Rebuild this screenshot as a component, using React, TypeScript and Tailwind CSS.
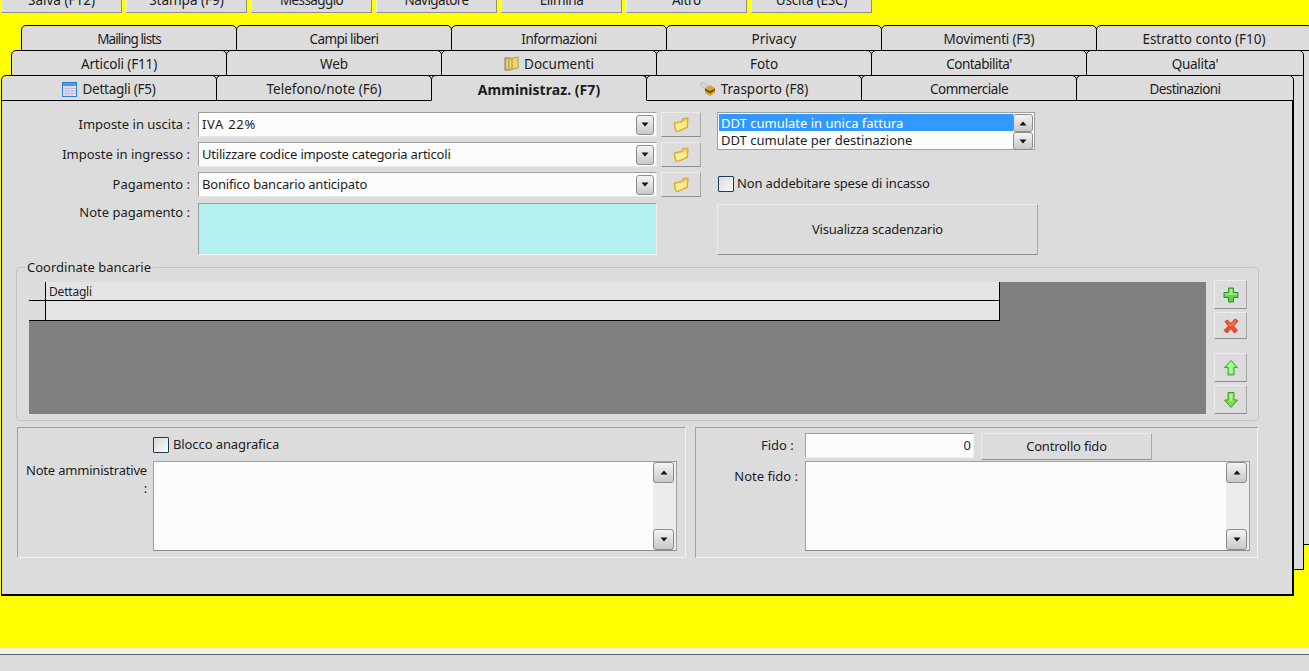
import React from "react";

const font = { fontFamily: '"Noto Sans", Tahoma, sans-serif' };

function Tab({ label, active, icon, last, track = "" }: { label: string; active?: boolean; icon?: React.ReactNode; last?: boolean; track?: string }) {
  return (
    <div
      className={
        "h-[26px] shrink-0 -mr-px flex items-center justify-center gap-[5px] rounded-t-[5px] border border-black bg-[#dcdcdc] pt-[2px] text-[#1c1c1c] " +
        (active ? "relative z-10 border-b-[#dcdcdc] text-[14px] font-bold tracking-[0.05px] " : "text-[13.5px] ") +
        (last ? "w-[218px]" : "w-[216px]")
      }
    >
      {icon}
      <span className={track}>{label}</span>
    </div>
  );
}

function Calendar() {
  return (
    <svg width="15" height="15" viewBox="0 0 15 15">
      <rect x="0.5" y="0.5" width="14" height="14" fill="#e8e4f4" stroke="#2f7fd0" />
      <rect x="1" y="1" width="13" height="3" fill="#4a9be8" />
      <path d="M1 6.5h13M1 9h13M1 11.5h13M4 4v10M7 4v10M10 4v10" stroke="#c2b8dc" strokeWidth="1" />
    </svg>
  );
}

function Folder({ w = 16 }: { w?: number }) {
  return (
    <svg width={w} height={w} viewBox="0 0 16 16">
      <path d="M1 6 L8 4.5 L10 1.5 L15 1 L14.5 10.5 L5 14.5 L2.5 14 Z" fill="#efc64a" stroke="#cfa92e" strokeWidth="1" strokeLinejoin="round" />
      <path d="M2.5 7 L10 5.5 L13.5 3 L13.5 9.5 L5 13.5 L3.5 13 Z" fill="#fcec94" />
    </svg>
  );
}

function Docs() {
  return (
    <svg width="16" height="16" viewBox="0 0 16 16">
      <rect x="1" y="2" width="5" height="12" fill="#d8c88a" stroke="#8a7a3a" />
      <path d="M5 3 L14 1 L14 12 L5 14 Z" fill="#f2d568" stroke="#b69a36" />
      <path d="M8 3 L8 13" stroke="#a88f3a" />
    </svg>
  );
}

function Truck() {
  return (
    <svg width="16" height="14" viewBox="0 0 16 14">
      <path d="M0 2 L4 0 L8 5 L5 8 Z" fill="#d4d4dc" stroke="#a4a4ae" strokeWidth="0.5" />
      <path d="M5 6 L10 3 L15 6 L15 11 L10 14 L5 11 Z" fill="#d9a62e" />
      <path d="M5 6.5 L10 9 L15 6.5 L15 8.5 L10 11.5 L5 8.5 Z" fill="#7a4e14" />
    </svg>
  );
}

function Spin({ up, h = "h-[18px]", w = "w-[20px]" }: { up?: boolean; h?: string; w?: string }) {
  return (
    <div className={"flex shrink-0 items-center justify-center rounded-[3px] border border-[#8c8c8c] bg-gradient-to-b from-[#f4f4f4] to-[#c8c8c8] " + h + " " + w}>
      <svg width="8" height="5" viewBox="0 0 8 5">
        <path d={up ? "M4 0.5 L7.5 4.5 L0.5 4.5 Z" : "M0.5 0.5 L7.5 0.5 L4 4.5 Z"} fill="#111" />
      </svg>
    </div>
  );
}

function Combo({ value, track = "tracking-[-0.2px]" }: { value: string; track?: string }) {
  return (
    <div className="flex h-[25px] w-[459px] items-center justify-between border border-[#a0a0a0] border-b-[#e8e8e8] border-r-[#e8e8e8] bg-[#fcfcfc] pl-[3px] pr-[2px]">
      <span className={"pt-[1px] " + track}>{value}</span>
      <Spin h="h-[20px]" w="w-[18px]" />
    </div>
  );
}

function RaisedBtn({ className, children }: { className: string; children?: React.ReactNode }) {
  return (
    <div className={"flex shrink-0 items-center justify-center border border-[#ececec] border-b-[#8e8e8e] border-r-[#a8a8a8] bg-[#dcdcdc] " + className}>
      {children}
    </div>
  );
}

function FormRow({ label, value, track }: { label: string; value: string; track?: string }) {
  return (
    <div className="flex h-[25px] items-center">
      <div className="w-[188px] text-right">{label}</div>
      <div className="ml-[8px] flex items-center gap-[4px]">
        <Combo value={value} track={track} />
        <RaisedBtn className="h-[25px] w-[40px]"><Folder /></RaisedBtn>
      </div>
    </div>
  );
}

function Check() {
  return <div className="h-[16px] w-[16px] shrink-0 rounded-[1px] border border-[#1f3a5f] bg-gradient-to-br from-[#d8d8d8] to-[#fcfcfc]" />;
}

function NoteArea({ className }: { className: string }) {
  return (
    <div className={"flex h-[90px] justify-end border border-[#a0a0a0] border-b-[#8c8c8c] bg-[#fcfcfc] " + className}>
      <div className="flex w-[23px] flex-col justify-between bg-[#ececec]">
        <Spin up h="h-[21px]" w="w-[21px]" />
        <Spin h="h-[21px]" w="w-[21px]" />
      </div>
    </div>
  );
}

function Plus() {
  return (
    <svg width="16" height="16" viewBox="0 0 16 16">
      <path d="M5.5 1 H10.5 V5.5 H15 V10.5 H10.5 V15 H5.5 V10.5 H1 V5.5 H5.5 Z" fill="#5fd04a" stroke="#2f8f2f" strokeLinejoin="round" />
      <path d="M6.5 2 H9.5 V6.5 H14 V8 H2 V6.5 H6.5 Z" fill="#a4ec8c" />
    </svg>
  );
}
function Cross() {
  return (
    <svg width="16" height="16" viewBox="0 0 16 16">
      <path d="M2 3.5 L4.5 2 L8 5.5 L12 1 L15 3 L10.5 8 L14.5 12.5 L11.5 15 L8 10.5 L4 15 L1 12.5 L5.5 8 Z" fill="#f0502c" stroke="#d2402a" strokeLinejoin="round" />
      <path d="M4.5 3 L8 7 L12 2.5 L13 3.5 L8.5 8 L7 8 Z" fill="#fb8a5c" />
    </svg>
  );
}
function ArrowUp() {
  return (
    <svg width="14" height="16" viewBox="0 0 14 16">
      <path d="M7 0.5 L13.5 7.5 L10 7.5 L10 15 L4 15 L4 7.5 L0.5 7.5 Z" fill="#7cf06a" stroke="#36a83a" strokeLinejoin="round" />
      <path d="M7 2 L11 6.5 L8.5 6.5 L8.5 13 L5.5 13 L5.5 6.5 L3 6.5 Z" fill="#b6f8a4" />
    </svg>
  );
}
function ArrowDown() {
  return (
    <svg width="14" height="16" viewBox="0 0 14 16">
      <path d="M4 0.5 L10 0.5 L10 8 L13.5 8 L7 15.5 L0.5 8 L4 8 Z" fill="#7ce04a" stroke="#3d9c30" strokeLinejoin="round" />
      <path d="M5.5 2 L8.5 2 L8.5 9 L5.5 9 Z" fill="#b6f08c" />
    </svg>
  );
}

const toolbar = [
  { t: "Salva (F12)", c: "" },
  { t: "Stampa (F9)", c: "" },
  { t: "Messaggio", c: "tracking-[-0.6px]" },
  { t: "Navigatore", c: "tracking-[-0.6px]" },
  { t: "Elimina", c: "tracking-[-0.4px]" },
  { t: "Altro", c: "tracking-[-0.3px]" },
  { t: "Uscita (ESC)", c: "tracking-[-0.2px]" },
];

export default function App() {
  return (
    <div style={font} className="flex h-[671px] w-[1309px] flex-col overflow-hidden bg-[#ffff00] text-[13px] text-[#1c1c1c]">
      <div className="flex h-[13px] shrink-0 items-end gap-[4px] overflow-hidden pl-[1px]">
        {toolbar.map(({ t, c }) => (
          <div key={t} className="flex h-[25px] w-[121px] shrink-0 items-center justify-center border border-[#ececec] border-b-[#8e8e8e] border-r-[#8e8e8e] bg-[#dcdcdc] text-[13.5px]">
            <span className={c}>{t}</span>
          </div>
        ))}
      </div>

      <div className="relative mt-[12px] h-[571px] shrink-0">
        <div className="absolute left-[100px] top-[24px] h-[496px] w-[1300px] border border-black bg-[#dcdcdc]" />
        <div className="absolute left-[100px] top-[49px] h-[496px] w-[1204px] border border-black bg-[#dcdcdc]" />

        <div className="relative flex pl-[21px]">
          <Tab label="Mailing lists" track="tracking-[-0.9px]" />
          <Tab label="Campi liberi" track="tracking-[-0.6px]" />
          <Tab label="Informazioni" track="tracking-[-0.5px]" />
          <Tab label="Privacy" />
          <Tab label="Movimenti (F3)" track="tracking-[-0.2px]" />
          <Tab label="Estratto conto (F10)" />
        </div>
        <div className="relative -mt-px flex pl-[11px]">
          <Tab label="Articoli (F11)" track="tracking-[-0.15px]" />
          <Tab label="Web" />
          <Tab label="Documenti" icon={<Docs />} track="-ml-[1px]" />
          <Tab label="Foto" />
          <Tab label="Contabilita'" track="tracking-[-0.5px]" />
          <Tab label="Qualita'" track="tracking-[-0.3px]" last />
        </div>
        <div className="relative -mt-px flex pl-[1px]">
          <Tab label="Dettagli (F5)" icon={<Calendar />} track="tracking-[-0.25px]" />
          <Tab label="Telefono/note (F6)" />
          <Tab label="Amministraz. (F7)" active />
          <Tab label="Trasporto (F8)" icon={<Truck />} />
          <Tab label="Commerciale" track="tracking-[-0.5px]" />
          <Tab label="Destinazioni" track="tracking-[-0.6px]" last />
        </div>

        <div className="relative -mt-px ml-[1px] h-[496px] w-[1293px] border border-black border-b-2 border-r-2 bg-[#dcdcdc] pl-[14px]">
          <div className="-ml-[14px] flex pt-[11px]">
            <div className="flex w-[715px] shrink-0 flex-col gap-[5px]">
              <FormRow label="Imposte in uscita :" value="IVA 22%" track="tracking-[0.7px]" />
              <FormRow label="Imposte in ingresso :" value="Utilizzare codice imposte categoria articoli" />
              <FormRow label="Pagamento :" value="Bonifico bancario anticipato" />
              <div className="mt-[1px] flex">
                <div className="w-[188px] text-right leading-[18px]">Note pagamento :</div>
                <div className="ml-[8px] h-[52px] w-[459px] border border-[#a0a0a0] border-b-[#f0f0f0] border-r-[#f0f0f0] bg-[#b4f0f0]" />
              </div>
            </div>
            <div className="flex flex-col">
              <div className="flex h-[38px] w-[318px] items-start border border-[#a0a0a0] bg-[#fcfcfc] p-[1px]">
                <div className="flex-1 leading-[17px]">
                  <div className="h-[17px] bg-[#3399ff] pl-[2px] pt-[1px] text-white">DDT cumulate in unica fattura</div>
                  <div className="pl-[2px] pt-[1px]">DDT cumulate per destinazione</div>
                </div>
                <div className="flex flex-col">
                  <Spin up />
                  <Spin />
                </div>
              </div>
              <div className="ml-[1px] mt-[26px] flex h-[16px] items-center gap-[3px]">
                <Check />
                <span className="tracking-[-0.15px]">Non addebitare spese di incasso</span>
              </div>
              <RaisedBtn className="mt-[12px] h-[51px] w-[321px]">
                <span className="tracking-[-0.2px]">Visualizza scadenzario</span>
              </RaisedBtn>
            </div>
          </div>

          <fieldset className="mt-[5px] h-[161px] w-[1243px] rounded-[4px] border border-[#c4c4c4] pl-[12px] pt-[8px]">
            <legend className="-ml-[4px] px-[2px] leading-[14px]">Coordinate bancarie</legend>
            <div className="flex gap-[8px]">
              <div className="h-[132px] w-[1177px] shrink-0 bg-[#808080]">
                <div className="w-[971px] border-b border-r border-black bg-[#e4e4e4] text-[12px]">
                  <div className="flex h-[19px] border-b border-black">
                    <div className="w-[17px] shrink-0 border-r border-black bg-[#dcdcdc]" />
                    <div className="pl-[3px] leading-[19px] tracking-[-0.2px]">Dettagli</div>
                  </div>
                  <div className="flex h-[19px]">
                    <div className="w-[17px] shrink-0 border-r border-black bg-[#dcdcdc]" />
                  </div>
                </div>
              </div>
              <div className="-mt-[2px] flex flex-col">
                <RaisedBtn className="h-[29px] w-[33px]"><Plus /></RaisedBtn>
                <RaisedBtn className="mt-[3px] h-[27px] w-[33px]"><Cross /></RaisedBtn>
                <RaisedBtn className="mt-[14px] h-[29px] w-[33px]"><ArrowUp /></RaisedBtn>
                <RaisedBtn className="mt-[3px] h-[29px] w-[33px]"><ArrowDown /></RaisedBtn>
              </div>
            </div>
          </fieldset>

          <div className="ml-[1px] mt-[6px] flex gap-[9px]">
            <div className="h-[131px] w-[669px] shrink-0 border border-[#a0a0a0] border-b-[#f0f0f0] border-r-[#f0f0f0] pl-[135px] pr-[8px] pt-[9px]">
              <div className="flex h-[16px] items-center gap-[4px]">
                <Check />
                <span className="tracking-[-0.1px]">Blocco anagrafica</span>
              </div>
              <div className="relative mt-[8px]">
                <div className="absolute -left-[140px] top-[0px] w-[134px] whitespace-nowrap text-right leading-[18px] tracking-[-0.2px]">
                  Note amministrative
                  <br />:
                </div>
                <NoteArea className="w-[524px]" />
              </div>
            </div>
            <div className="h-[131px] w-[563px] shrink-0 border border-[#a0a0a0] border-b-[#f0f0f0] border-r-[#f0f0f0] pl-[109px] pr-[7px] pt-[5px]">
              <div className="relative flex items-start gap-[7px]">
                <div className="absolute -left-[44px] top-[3px] leading-[18px]">Fido :</div>
                <div className="flex h-[25px] w-[169px] items-center justify-end border border-[#a0a0a0] border-b-[#f0f0f0] border-r-[#f0f0f0] bg-[#fcfcfc] pr-[2px]">0</div>
                <RaisedBtn className="h-[27px] w-[171px]"><span className="tracking-[-0.2px]">Controllo fido</span></RaisedBtn>
              </div>
              <div className="relative mt-[1px]">
                <div className="absolute -left-[72px] top-[6px] w-[65px] text-right leading-[18px]">Note fido :</div>
                <NoteArea className="w-[445px]" />
              </div>
            </div>
          </div>
        </div>
      </div>

      <div className="mt-[52px] h-[6px] shrink-0 bg-[#f4f4e0]" />
      <div className="flex-1 border-t border-[#5a6478] bg-[#dcdcdc]" />
    </div>
  );
}
